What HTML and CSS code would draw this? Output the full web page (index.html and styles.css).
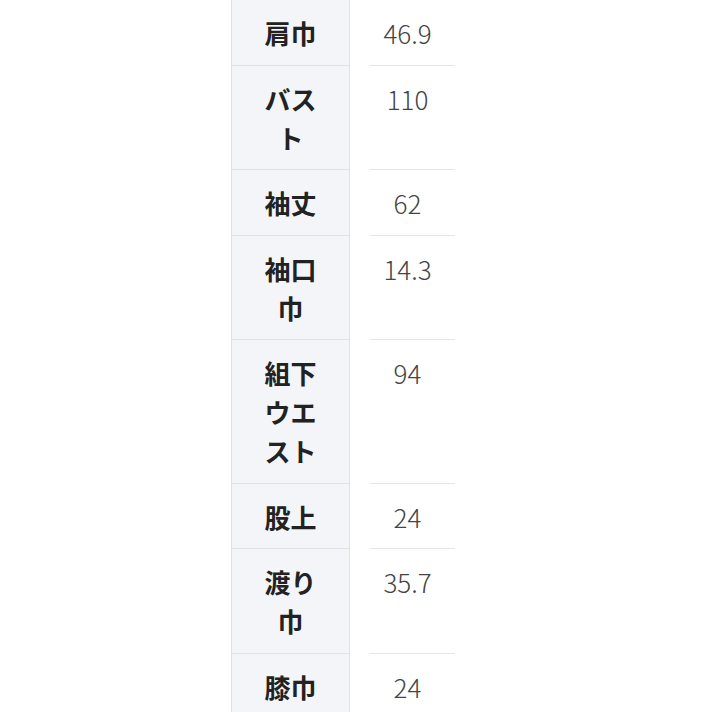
FILE: index.html
```html
<!DOCTYPE html>
<html lang="ja">
<head>
<meta charset="utf-8">
<link rel="stylesheet" href="styles.css">
</head>
<body>
<div class="table">
  <div class="row"><div class="th">肩巾</div><div class="td">46.9</div></div>
  <div class="row"><div class="th">バスト</div><div class="td">110</div></div>
  <div class="row"><div class="th">袖丈</div><div class="td">62</div></div>
  <div class="row"><div class="th">袖口巾</div><div class="td">14.3</div></div>
  <div class="row"><div class="th">組下ウエスト</div><div class="td">94</div></div>
  <div class="row"><div class="th">股上</div><div class="td">24</div></div>
  <div class="row"><div class="th">渡り巾</div><div class="td">35.7</div></div>
  <div class="row"><div class="th">膝巾</div><div class="td">24</div></div>
</div>
</body>
</html>
```

FILE: styles.css
```css
html, body {
  margin: 0;
  padding: 0;
  background: #ffffff;
}
body {
  font-family: "Noto Sans CJK JP", "Noto Sans", sans-serif;
  font-size: 26px;
  line-height: 39px;
}
.table {
  display: flex;
  flex-direction: column;
  padding-left: 231px;
}
.row {
  display: flex;
  gap: 20px;
  align-items: stretch;
}
.th {
  box-sizing: border-box;
  width: 119px;
  padding: 13px 29px 12.5px;
  background: #f3f5f8;
  border-left: 1px solid #dfe3e8;
  border-right: 1px solid #dfe3e8;
  border-bottom: 1px solid #dfe3e8;
  text-align: center;
  font-weight: 700;
  color: #222222;
}
.td {
  box-sizing: border-box;
  width: 85px;
  padding: 13px 10px 12.5px 0;
  border-bottom: 1px solid #e3e5e8;
  text-align: center;
  font-weight: 300;
  color: #444444;
}
```
